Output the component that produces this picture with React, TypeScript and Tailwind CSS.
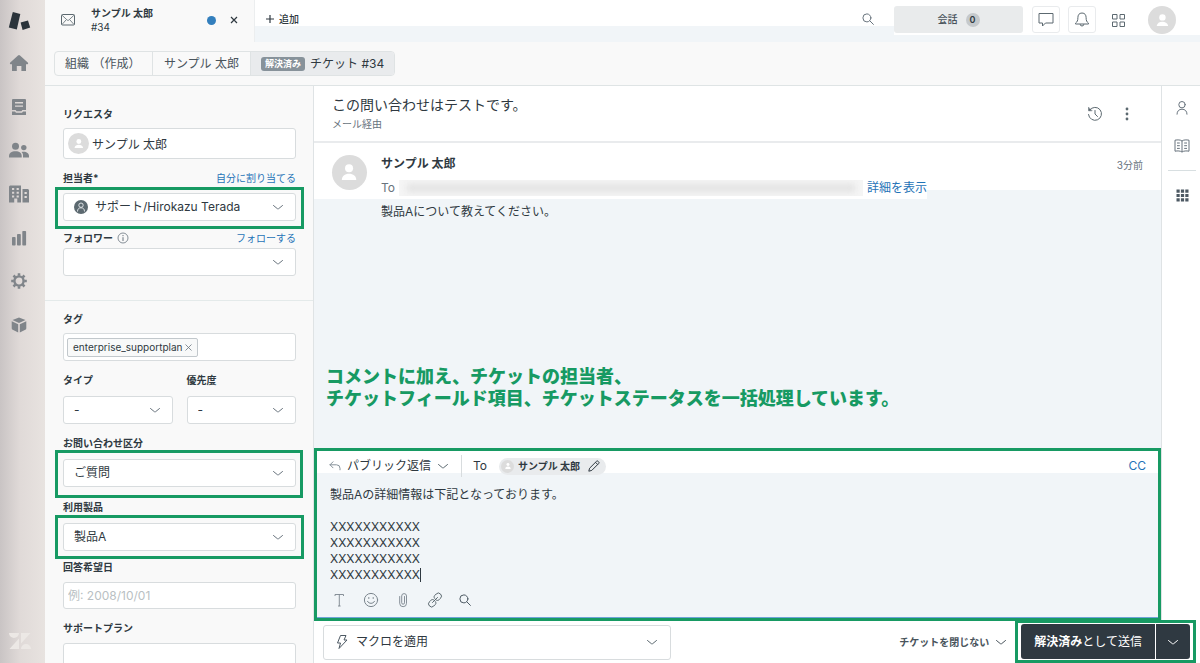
import React from "react";

type IconProps = { className?: string };

const Chevron = ({ className = "" }: IconProps) => (
  <svg viewBox="0 0 12 12" className={`h-3 w-3 ${className}`} fill="none" stroke="currentColor" strokeLinecap="round" strokeLinejoin="round" aria-hidden="true">
    <path d="M1.500 4.500 5.400 7.700q.6.400 1.200 0L10.500 4.500" />
  </svg>
);

const Person = ({ className = "" }: IconProps) => (
  <span className={`flex shrink-0 items-center justify-center rounded-full bg-[#dcdcdc] ${className}`}>
    <svg viewBox="0 0 16 16" className="h-[46%] w-[46%]" fill="#fff" aria-hidden="true">
      <circle cx="8" cy="4.200" r="4" />
      <path d="M0.800 16c0-4.200 3-6.400 7.200-6.400s7.200 2.200 7.200 6.400z" />
    </svg>
  </span>
);

const SearchIcon = ({ className = "" }: IconProps) => (
  <svg viewBox="0 0 12 12" className={`h-3 w-3 ${className}`} fill="none" stroke="currentColor" strokeLinecap="round" aria-hidden="true">
    <circle cx="4.900" cy="4.900" r="4" />
    <path d="m7.800 7.800 3.600 3.600" />
  </svg>
);

const Logo = () => (
  <svg viewBox="0 0 24 20" className="h-5 w-6" fill="#2b343b" aria-hidden="true">
    <path d="M4.800 1 12.300 3 8.800 18.500 0.800 16.500z" />
    <path d="M12.600 11.600 20 9.400 22.200 16.600 14.600 18.900z" />
  </svg>
);

const railIcons: { label: string; icon: React.ReactNode }[] = [
  { label: "ホーム", icon: <path d="M9 2.500q1-.8 2 0l8 7.300q.5 1.200-.5 1.400H17V18h-4.600v-5H7.800v5H3v-6.800H1.500q-1-.2-.5-1.400z" /> },
  {
    label: "ビュー",
    icon: (
      <path fillRule="evenodd" d="M4 2h12q1 0 1 1v10h-3.600l-1 1.200H7.600L6.600 13H3V3q0-1 1-1zM6 5v1.400h8V5zm0 3.400v1.400h8V8.400zM3 14.600h3l1 1.200h6l1-1.200h3V18H3z" />
    ),
  },
  {
    label: "顧客",
    icon: (
      <>
        <circle cx="6.500" cy="6.300" r="3.500" />
        <path d="M0 17.500v-1.300c0-3 2.500-4.900 6.500-4.900s6.200 1.900 6.200 4.900v1.300z" />
        <circle cx="14.800" cy="7.600" r="2.700" />
        <path d="M14 17.500v-1.800c0-1.700-.5-2.800-1.500-3.700 3.900-1 7.500.600 7.500 4v1.500z" />
      </>
    ),
  },
  {
    label: "組織",
    icon: (
      <path fillRule="evenodd" d="M1 1.500h11v17H8.300v-4H5.200v4H0v-16zM3 4v2h2.200V4zm4.600 0v2h2.200V4zM3 7.800v2h2.200v-2zm4.600 0v2h2.200v-2zM3 11.600v2h2.200v-2zm4.600 0v2h2.200v-2zM13.500 5H19l1 1v12.500h-6.500zM15.500 8v2h2.300V8zm0 4v2h2.300v-2z" />
    ),
  },
  {
    label: "レポート",
    icon: (
      <>
        <rect x="3" y="9" width="3.600" height="8.500" rx="0.800" />
        <rect x="8" y="6" width="3.800" height="11.500" rx="0.800" />
        <rect x="13.300" y="3" width="3.800" height="14.500" rx="0.800" />
      </>
    ),
  },
  {
    label: "設定",
    icon: (
      <>
        <circle cx="10" cy="10" r="4.600" fill="none" stroke="currentColor" strokeWidth="2.400" />
        <path d="M10 2.200v2.600M10 15.200v2.600M2.200 10h2.600M15.200 10h2.600M4.500 4.500l1.800 1.800M13.700 13.700l1.800 1.800M15.500 4.500l-1.800 1.800M6.300 13.700l-1.800 1.800" stroke="currentColor" strokeWidth="2.600" />
      </>
    ),
  },
  { label: "アプリ", icon: <path d="M10 2.500 16.500 5 10 8 3.500 5zM2.700 6.300l6.500 3v8.200l-5.500-2.700q-1-.5-1-1.500zM17.300 6.300l-6.500 3v8.200l5.500-2.700q1-.5 1-1.500z" /> },
];

function Rail() {
  return (
    <nav className="flex w-[45px] shrink-0 flex-col bg-linear-to-r from-[#c9c4c4] via-[#e0dad8] via-45% to-[#e8e3e0] text-[#80858a]">
      <a href="#top" aria-label="Support" className="flex h-[41px] items-center pl-2">
        <Logo />
      </a>
      <div className="flex h-[306px] flex-col">
        {railIcons.map((item) => (
          <button key={item.label} type="button" aria-label={item.label} className="flex w-[38px] flex-1 items-center justify-center">
            <svg viewBox="0 0 20 20" className="h-5 w-5" fill="currentColor" aria-hidden="true">
              {item.icon}
            </svg>
          </button>
        ))}
      </div>
      <svg viewBox="0 0 24 20" className="mt-auto mb-3 ml-2 h-5 w-6" fill="#ece8e5" aria-hidden="true">
        <path d="M1 2h10a5 5 0 0 1-10 0zM13 2h9.500L13 12.500zM11 7.500V18H1.500zM13 18a5 5 0 0 1 10 0z" />
      </svg>
    </nav>
  );
}

function TopBar() {
  return (
    <header className="flex h-[42px] shrink-0 bg-[linear-gradient(#fff_26px,#f1f5f8_26px)]">
      <div className="flex w-[210px] shrink-0 items-center border-r border-[#eceeef] bg-[#f9f9f9] pr-3 pb-0.5 pl-4">
        <svg viewBox="0 0 14 12" className="h-3 w-3.5 shrink-0 text-[#5c6970]" fill="none" stroke="currentColor" aria-hidden="true">
          <rect x="0.500" y="0.500" width="13" height="10.500" rx="1" />
          <path d="m1 1.200 5.200 4.900q.8.700 1.600 0L13 1.200M1 10.500l4-4.500M13 10.500 9 6" strokeWidth="0.800" />
        </svg>
        <div className="ml-4 text-[10px] leading-[14px] text-[#2f3941]">
          <div className="font-bold">サンプル 太郎</div>
          <div className="text-[10px]">#34</div>
        </div>
        <span className="mr-2.5 ml-auto h-[9px] w-[9px] rounded-full bg-[#337fbd]" />
        <button type="button" aria-label="タブを閉じる" className="flex h-4 w-4 items-center justify-center text-[#2f3941]">
          <svg viewBox="0 0 8 8" className="h-2 w-2" stroke="currentColor" strokeWidth="1.200" aria-hidden="true">
            <path d="m1 1 6 6M7 1 1 7" />
          </svg>
        </button>
      </div>
      <button type="button" className="flex h-[38px] items-center gap-[5px] pl-[11px] text-[10px] font-medium text-[#2f3941]">
        <svg viewBox="0 0 8 8" className="h-2 w-2" stroke="currentColor" strokeWidth="1.200" aria-hidden="true">
          <path d="M4 0v8M0 4h8" />
        </svg>
        追加
      </button>
      <div className="ml-auto flex">
        <button type="button" aria-label="検索" className="mt-[13px] mr-5 h-3 w-3 text-[#68737d]">
          <SearchIcon />
        </button>
        <div className="flex bg-[linear-gradient(#fff_35px,#f1f5f8_35px)] pt-1.5 pr-6">
          <button type="button" className="flex h-[27px] w-[129px] items-center justify-center gap-2 rounded-[3px] bg-[#e9ebec] text-[10px] font-medium text-[#49545c]">
            会話
            <span className="flex h-[14px] w-[14px] items-center justify-center rounded-full bg-[#c5c9cc] text-[9px] font-semibold text-[#2f3941]">0</span>
          </button>
          <button type="button" aria-label="チャット" className="ml-[9px] flex h-[27px] w-7 items-center justify-center rounded-[3px] border border-[#e9ebed] bg-white text-[#5c6970]">
            <svg viewBox="0 0 16 16" className="h-4 w-4" fill="none" stroke="currentColor" strokeLinejoin="round" aria-hidden="true">
              <path d="M1 1.500h14v9.500H7.500L4.500 14v-3H1z" />
            </svg>
          </button>
          <button type="button" aria-label="通知" className="ml-2 flex h-[27px] w-7 items-center justify-center rounded-[3px] border border-[#e9ebed] bg-white text-[#5c6970]">
            <svg viewBox="0 0 16 16" className="h-4 w-4" fill="none" stroke="currentColor" strokeLinejoin="round" aria-hidden="true">
              <path d="M8 1C5 1 3.900 3.200 3.900 5.500c0 3.300-.7 4.300-2.400 5.700v.8h13v-.8c-1.700-1.400-2.400-2.400-2.400-5.700C12.100 3.200 11 1 8 1zM6.200 12.200a1.800 1.800 0 0 0 3.600 0" />
            </svg>
          </button>
          <button type="button" aria-label="製品" className="ml-2 flex h-7 w-7 items-center justify-center text-[#5c6970]">
            <svg viewBox="0 0 13 13" className="h-[13px] w-[13px]" fill="none" stroke="currentColor" aria-hidden="true">
              <path d="M.5.5h4.500V5H.5zM8 .5h4.500V5H8zM.5 8h4.500v4.500H.5zM8 8h4.500v4.500H8z" />
            </svg>
          </button>
          <button type="button" aria-label="プロフィール" className="ml-4 h-7 w-7">
            <Person className="h-7 w-7" />
          </button>
        </div>
      </div>
    </header>
  );
}

function Breadcrumbs() {
  return (
    <div className="flex h-11 shrink-0 items-start border-b border-[#dfe4e5] bg-[#f9f9f9] pt-[9px] pl-[9px]">
      <div className="flex h-[25px] divide-x divide-[#dfe3e4] overflow-hidden rounded-[4px] border border-[#dfe3e4] text-[12px] text-[#49545c]">
        <a href="#org" className="flex w-[98px] items-center pl-2.5 whitespace-pre">組織 （作成）</a>
        <a href="#user" className="flex w-[98px] items-center justify-center">サンプル 太郎</a>
        <a href="#ticket" className="flex items-center gap-[5px] bg-[#e9ebed] px-2.5 text-[#2f3941]">
          <span className="rounded-[3px] bg-[#87929a] px-1 text-[9px] leading-[14px] font-bold text-white">解決済み</span>
          チケット #34
        </a>
      </div>
    </div>
  );
}

const green = "border-[3px] border-[#179a63]";
const labelStyle = "text-[10px] leading-4 font-bold text-[#2f3941]";
const boxStyle = "w-full rounded-[3px] border border-[#d8dcde] bg-white text-[12px] text-[#2f3941] outline-none";

type SelectFieldProps = {
  id: string;
  label: string;
  value: string;
  className?: string;
  gap?: string;
  info?: boolean;
  action?: string;
  selectClass?: string;
  mark?: string;
  icon?: React.ReactNode;
};

function SelectField({ id, label, value, className = "", gap = "mt-2", info, action, selectClass = "pl-2.5", mark, icon }: SelectFieldProps) {
  return (
    <div className={className}>
      <div className="flex items-center">
        <label htmlFor={id} className={labelStyle}>
          {label}
        </label>
        {info && (
          <svg viewBox="0 0 12 12" className="ml-1 h-3 w-3 text-[#68737d]" fill="none" stroke="currentColor" aria-hidden="true">
            <circle cx="6" cy="6" r="5" strokeWidth="0.800" />
            <path d="M6 5.200V9M6 3v1.200" />
          </svg>
        )}
        {action && (
          <button type="button" className="ml-auto text-[10px] leading-4 text-[#1f73b7]">
            {action}
          </button>
        )}
      </div>
      <div className={`relative ${gap}`}>
        <select id={id} defaultValue={value} className={`h-7 appearance-none ${boxStyle} ${selectClass}`}>
          <option>{value}</option>
        </select>
        {icon}
        <Chevron className="pointer-events-none absolute top-2 right-3 text-[#68737d]" />
        {mark && <span className={`pointer-events-none absolute ${green} ${mark}`} />}
      </div>
    </div>
  );
}

function TicketFields() {
  return (
    <aside className="w-[269px] shrink-0 overflow-hidden border-r border-[#dfe3e5] bg-[#f9f9f9]">
      <div className="border-b border-[#e4eaea] pt-5 pr-[17px] pb-6 pl-[18px]">
        <label htmlFor="requester" className={`block ${labelStyle}`}>
          リクエスタ
        </label>
        <div className="relative mt-1.5">
          <input id="requester" defaultValue="サンプル 太郎" className={`h-[31px] pl-7 ${boxStyle}`} />
          <span className="pointer-events-none absolute top-[5px] left-[5px]">
            <Person className="h-[21px] w-[21px]" />
          </span>
        </div>
        <SelectField
          id="assignee"
          label="担当者*"
          action="自分に割り当てる"
          value="サポート/Hirokazu Terada"
          className="mt-[11px]"
          gap="mt-[7px]"
          selectClass="pl-[31px]"
          mark="-inset-x-2 -top-1.5 -bottom-2"
          icon={
            <span className="pointer-events-none absolute top-[7px] left-[11px] text-[#5c6970]">
              <svg viewBox="0 0 14 14" className="h-3.5 w-3.5" aria-hidden="true">
                <circle cx="7" cy="7" r="7" fill="currentColor" />
                <g fill="none" stroke="#dfe3e6">
                  <circle cx="7" cy="5.200" r="2.200" />
                  <path d="M3.500 11.500c0-2.500 1.300-3.700 3.500-3.700s3.500 1.200 3.500 3.700" />
                </g>
              </svg>
            </span>
          }
        />
        <SelectField id="followers" label="フォロワー" info action="フォローする" value="" className="mt-[9px]" gap="mt-0.5" />
      </div>
      <div className="pt-2.5 pr-[17px] pl-[18px]">
        <label htmlFor="tags" className={`block ${labelStyle}`}>
          タグ
        </label>
        <div className="mt-1.5 flex h-7 items-center rounded-[3px] border border-[#d8dcde] bg-white px-[3px]">
          <span className="flex h-[19px] items-center gap-0.5 rounded-[2px] border border-[#c2c8cc] bg-[#f8f9f9] px-[5px] text-[10px] text-[#2f3941]">
            enterprise_supportplan
            <button type="button" aria-label="タグを削除">
              <svg viewBox="0 0 7 7" className="h-[7px] w-[7px]" stroke="#68737d" strokeWidth="0.800" aria-hidden="true">
                <path d="m.5.5 6 6M6.500.5l-6 6" />
              </svg>
            </button>
          </span>
          <input id="tags" className="min-w-0 flex-1 outline-none" />
        </div>
        <div className="mt-[11px] grid grid-cols-2 gap-3.5">
          <SelectField id="type" label="タイプ" value="-" />
          <SelectField id="priority" label="優先度" value="-" />
        </div>
        <SelectField id="category" label="お問い合わせ区分" value="ご質問" className="mt-[11px]" mark="-top-[9px] -right-[7px] -bottom-[11px] -left-2" />
        <SelectField id="product" label="利用製品" value="製品A" className="mt-3" mark="-inset-x-2 -top-2 -bottom-2" />
        <label htmlFor="due" className={`mt-2 block ${labelStyle}`}>
          回答希望日
        </label>
        <input id="due" placeholder="例: 2008/10/01" className={`mt-[7px] block h-[27px] pl-1 placeholder:text-[#b9bfc3] ${boxStyle}`} />
        <label htmlFor="plan" className={`mt-[11px] block ${labelStyle}`}>
          サポートプラン
        </label>
        <input id="plan" className={`mt-[7px] block h-7 px-2 ${boxStyle}`} />
      </div>
    </aside>
  );
}

function Conversation() {
  return (
    <>
      <div className="flex h-[57px] shrink-0 items-start border-b-2 border-[#e9ebed] bg-white pt-2.5 pr-[26px] pl-[18px]">
        <div>
          <h1 className="text-[14px] leading-[18px] text-[#2f3941]">この問い合わせはテストです。</h1>
          <p className="mt-px text-[10px] leading-[18px] text-[#68737d]">メール経由</p>
        </div>
        <div className="mt-2.5 ml-auto flex gap-4 text-[#5c6970]">
          <button type="button" aria-label="イベント履歴">
            <svg viewBox="0 0 16 16" className="h-4 w-4" fill="none" stroke="currentColor" strokeLinecap="round" aria-hidden="true">
              <path d="M2.700 4A6.500 6.500 0 1 1 1.500 8.500M8 4.500V8l2.500 2.500" />
              <path d="M1.500 1.500v3.300h3.300z" fill="currentColor" strokeWidth="0.500" />
            </svg>
          </button>
          <button type="button" aria-label="その他">
            <svg viewBox="0 0 16 16" className="h-4 w-4" fill="currentColor" aria-hidden="true">
              <circle cx="8" cy="3" r="1.400" />
              <circle cx="8" cy="8" r="1.400" />
              <circle cx="8" cy="13" r="1.400" />
            </svg>
          </button>
        </div>
      </div>
      <article className="flex min-h-0 flex-1 flex-col bg-[#f1f5f8]">
        <div className="flex items-start">
          <div className="flex h-14 bg-white pt-3 pl-[18px]">
            <Person className="h-[35px] w-[35px]" />
            <div className="ml-3.5 text-[12px] leading-[18px]">
              <h2 className="font-bold text-[#2f3941]">サンプル 太郎</h2>
              <div className="mt-1.5 flex items-center">
                <span className="text-[#68737d]">To</span>
                <span className="mx-1 flex h-4 w-[464px] items-center overflow-hidden bg-[#f5f5f5]">
                  <span className="mx-2 h-2 flex-1 bg-[#e2e2e2] blur-[3px]" />
                </span>
                <a href="#details" className="text-[#1f73b7]">詳細を表示</a>
              </div>
            </div>
          </div>
          <div className="flex h-[47px] flex-1 justify-end bg-white pt-3.5 pr-[18px] text-[10px] leading-4 text-[#68737d]">3分前</div>
        </div>
        <p className="pt-1 pl-[67px] text-[12px] leading-[18px] text-[#2f3941]">製品Aについて教えてください。</p>
        <p className="mt-auto pb-[38px] pl-3 text-[18px] leading-[22px] font-black text-[#179a63]">
          コメントに加え、チケットの担当者、
          <br />
          チケットフィールド項目、チケットステータスを一括処理しています。
        </p>
      </article>
    </>
  );
}

const reply = `製品Aの詳細情報は下記となっております。

XXXXXXXXXXX
XXXXXXXXXXX
XXXXXXXXXXX
XXXXXXXXXXX`;

function Composer() {
  return (
    <section className={`flex h-[173px] shrink-0 flex-col bg-[#f1f5f8] ${green}`}>
      <div className="flex h-[22px] items-center bg-white pt-2 pr-3 pl-3 text-[12px] text-[#2f3941]">
        <button type="button" className="flex items-center gap-1.5">
          <svg viewBox="0 0 12 12" className="h-3 w-3 text-[#87929a]" fill="none" stroke="currentColor" strokeLinecap="round" strokeLinejoin="round" aria-hidden="true">
            <path d="M4 1.800 1 4.800l3 3M1 4.800h6.500q3.500 0 3.500 3.500v1.500" />
          </svg>
          パブリック返信
          <Chevron className="text-[#5c6970]" />
        </button>
        <span className="ml-3 h-[22px] w-px bg-[#d8dcde]" />
        <span className="ml-[11px]">To</span>
        <button type="button" className="ml-3 flex h-[17px] items-center rounded-full bg-[#e9ebed] pr-1.5 pl-0.5 text-[10px] font-bold">
          <Person className="h-[13px] w-[13px]" />
          <span className="ml-1">サンプル 太郎</span>
          <svg viewBox="0 0 12 12" className="ml-2 h-3 w-3" fill="none" stroke="currentColor" strokeLinejoin="round" aria-hidden="true">
            <path d="m.8 11.200.8-3L8.500 1.300q.8-.8 1.600 0l.6.600q.8.800 0 1.600L3.800 10.400zM7.500 2.300l2.200 2.200" />
          </svg>
        </button>
        <button type="button" className="ml-auto text-[#1f73b7]">CC</button>
      </div>
      <div className="relative mt-3.5 pl-[13px]">
        <textarea
          aria-label="返信内容"
          defaultValue={reply}
          rows={6}
          className="block h-24 w-full resize-none overflow-hidden bg-transparent text-[12px] leading-4 text-[#2f3941] outline-none"
        />
        <span className="absolute bottom-px left-[103px] h-3.5 w-px bg-[#2f3941]" />
      </div>
      <div className="mt-auto flex h-[35px] items-center gap-4 border-b border-[#6fa3d8] pl-3.5 text-[#7b858d]">
        <button type="button" aria-label="テキスト書式">
          <svg viewBox="0 0 16 16" className="h-4 w-4" fill="none" stroke="currentColor" aria-hidden="true">
            <path d="M4 4V2.500h8.500V4M8.300 2.500V14M7 14h2.600" strokeWidth="0.900" />
          </svg>
        </button>
        <button type="button" aria-label="絵文字">
          <svg viewBox="0 0 16 16" className="h-4 w-4" fill="none" stroke="currentColor" strokeLinecap="round" aria-hidden="true">
            <circle cx="8" cy="8" r="6.600" />
            <path d="M4.500 9.300c1.300 2.800 5.700 2.800 7 0M5.800 5.500v1M10.200 5.500v1" />
          </svg>
        </button>
        <button type="button" aria-label="添付">
          <svg viewBox="0 0 16 16" className="h-4 w-4" fill="none" stroke="currentColor" strokeWidth="0.900" strokeLinecap="round" aria-hidden="true">
            <path d="M9.500 4.500v6.300a1.400 1.400 0 0 1-2.800 0V4a2.400 2.400 0 0 1 4.800 0v7.300a3.400 3.400 0 0 1-6.800 0V4.500" />
          </svg>
        </button>
        <button type="button" aria-label="リンク">
          <svg viewBox="0 0 16 16" className="h-4 w-4 text-[#5c6970]" fill="none" stroke="currentColor" strokeLinecap="round" aria-hidden="true">
            <path d="m5.500 10.500 5-5M7.600 6.400c-.8-1-.7-2.100.1-2.900l1.500-1.500a3 3 0 0 1 4.300 0 3 3 0 0 1 0 4.300L12 7.800c-.8.800-1.900.9-2.900.2M8.400 9.600c.8 1 .7 2.100-.1 2.900L6.800 14a3 3 0 0 1-4.300 0 3 3 0 0 1 0-4.300L4 8.200c.8-.8 1.900-.9 2.900-.2" />
          </svg>
        </button>
        <button type="button" aria-label="ナレッジ検索" className="text-[#4d5963]">
          <SearchIcon />
        </button>
      </div>
    </section>
  );
}

function AppRail() {
  return (
    <div className="flex w-[39px] shrink-0 flex-col items-center border-l border-[#dfe3e5] bg-white pt-3.5 pl-0.5 text-[#68737d]">
      <button type="button" aria-label="顧客">
        <svg viewBox="0 0 16 16" className="h-4 w-4" fill="none" stroke="currentColor" strokeLinecap="round" aria-hidden="true">
          <circle cx="8" cy="4.700" r="3.200" />
          <path d="M3 14.200c0-3.200 2-5 5-5s5 1.800 5 5" />
        </svg>
      </button>
      <button type="button" aria-label="ナレッジ" className="mt-[22px]">
        <svg viewBox="0 0 16 16" className="h-4 w-4" fill="none" stroke="currentColor" strokeLinejoin="round" aria-hidden="true">
          <path d="M8 3C6.500 1.700 3.500 1.700 1 2.200v11c2.500-.5 5.500-.4 7 .9 1.500-1.300 4.500-1.400 7-.9v-11C12.500 1.700 9.500 1.700 8 3zM8 3v11M3 5h2.800M3 7.700h2.800M3 10.400h2.800M10.200 5H13M10.200 7.700H13M10.200 10.400H13" />
        </svg>
      </button>
      <hr className="mt-4 w-7 border-[#d8dfe1]" />
      <button type="button" aria-label="アプリ" className="mt-[18px] text-[#4d5963]">
        <svg viewBox="0 0 13 13" className="h-[13px] w-[13px]" fill="currentColor" aria-hidden="true">
          <path d="M0.500 0.500h3.200v3.200H0.500zM4.900 0.500h3.200v3.200H4.900zM9.300 0.500h3.200v3.200H9.300zM0.500 4.900h3.200v3.200H0.500zM4.900 4.900h3.200v3.200H4.900zM9.300 4.900h3.200v3.200H9.300zM0.500 9.300h3.200v3.200H0.500zM4.900 9.300h3.200v3.200H4.900zM9.300 9.300h3.200v3.200H9.300z" />
        </svg>
      </button>
    </div>
  );
}

function Footer() {
  return (
    <footer className="flex h-[42px] shrink-0 items-center bg-white pr-1">
      <button type="button" className="ml-[9px] flex h-[35px] w-[348px] items-center rounded-[3px] border border-[#d8dcde] px-3 text-[12px] text-[#2f3941]">
        <svg viewBox="0 0 12 16" className="mr-2 h-4 w-3 text-[#4d5963]" fill="none" stroke="currentColor" strokeLinejoin="round" aria-hidden="true">
          <path d="M4.500 1.500H10L8 6h3L3 14.500 4.500 9H1.500z" />
        </svg>
        マクロを適用
        <Chevron className="ml-auto text-[#5c6970]" />
      </button>
      <button type="button" className="ml-auto flex items-center gap-1.5 text-[10px] font-bold text-[#49545c]">
        チケットを閉じない
        <Chevron />
      </button>
      <div className={`-mt-px ml-2 flex h-[43px] items-center px-[3px] text-[12px] text-white ${green}`}>
        <button type="button" className="h-[35px] rounded-l-[3px] bg-[#2f3941] px-[13px]">
          <b>解決済み</b>として送信
        </button>
        <button type="button" aria-label="送信オプション" className="ml-px flex h-[35px] w-[34px] items-center justify-center rounded-r-[3px] bg-[#2f3941]">
          <Chevron />
        </button>
      </div>
    </footer>
  );
}

export default function App() {
  return (
    <div className="flex h-screen overflow-hidden bg-white font-['Inter','Noto_Sans_CJK_JP',sans-serif]">
      <Rail />
      <div className="flex min-w-0 flex-1 flex-col">
        <TopBar />
        <Breadcrumbs />
        <div className="flex min-h-0 flex-1">
          <TicketFields />
          <div className="flex min-w-0 flex-1 flex-col">
            <div className="flex min-h-0 flex-1">
              <main className="flex min-w-0 flex-1 flex-col">
                <Conversation />
                <Composer />
              </main>
              <AppRail />
            </div>
            <Footer />
          </div>
        </div>
      </div>
    </div>
  );
}
